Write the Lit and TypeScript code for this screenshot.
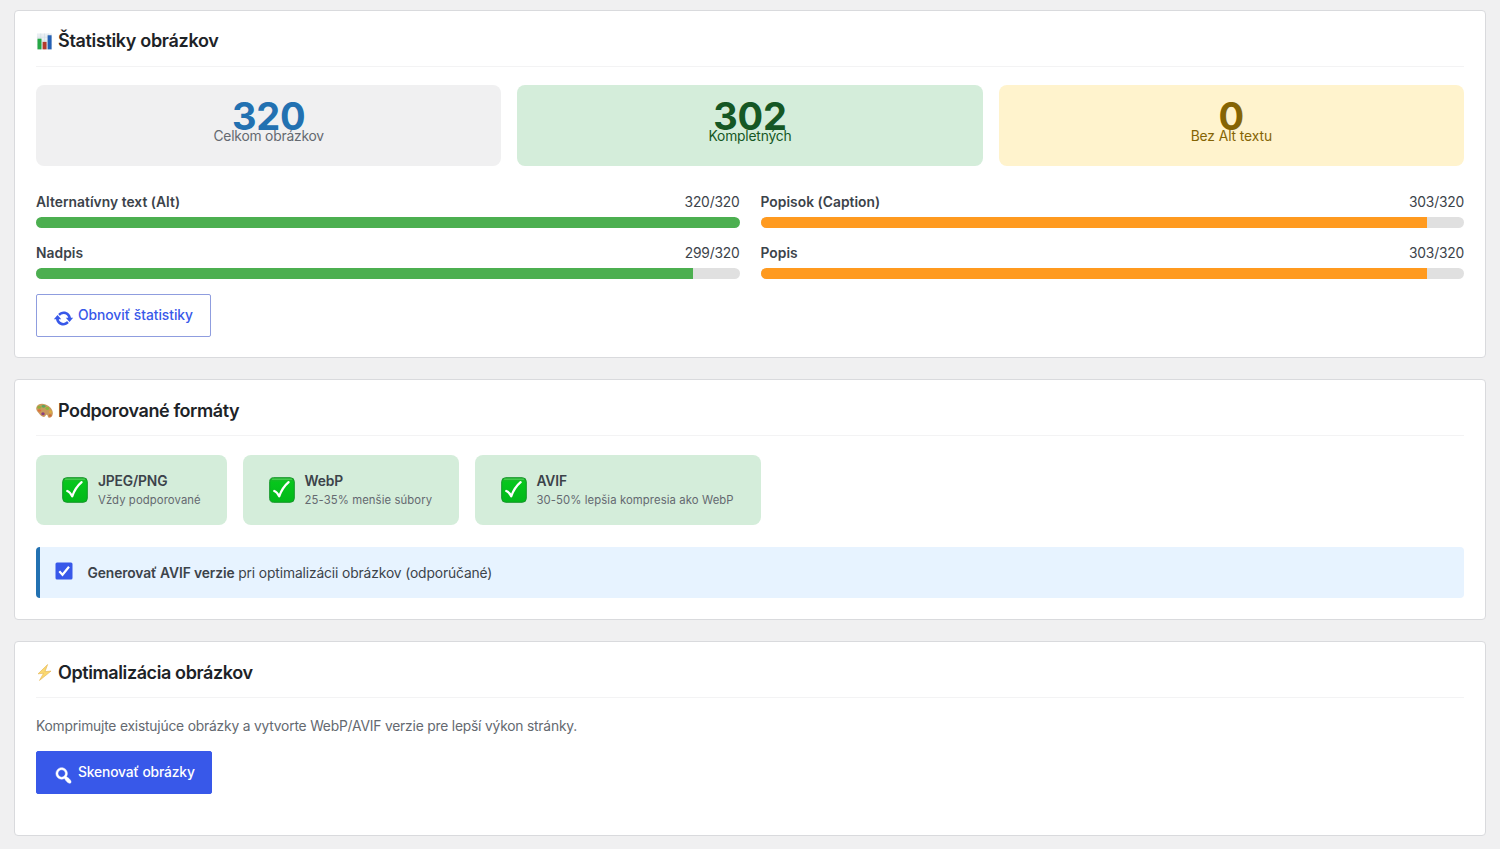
import { LitElement, html, css, svg } from "lit";
import { customElement } from "lit/decorators.js";
import { styleMap } from "lit/directives/style-map.js";

interface Progress {
  label: string;
  done: number;
  total: number;
  tone: string;
}

const progress: Progress[] = [
  { label: "Alternatívny text (Alt)", done: 320, total: 320, tone: "green" },
  { label: "Popisok (Caption)", done: 303, total: 320, tone: "orange" },
  { label: "Nadpis", done: 299, total: 320, tone: "green" },
  { label: "Popis", done: 303, total: 320, tone: "orange" },
];

const formats = [
  { id: "jpeg", name: "JPEG/PNG", note: "Vždy podporované" },
  { id: "webp", name: "WebP", note: "25-35% menšie súbory" },
  { id: "avif", name: "AVIF", note: "30-50% lepšia kompresia ako WebP" },
];

const chartIcon = svg`<svg class="emoji" viewBox="0 0 18 18">
  <rect x="1" y="0.5" width="16" height="17" fill="#e9eef2"/>
  <path d="M1 4.5h16M1 8.5h16M1 12.5h16M5 .5v17M9 .5v17M13 .5v17" stroke="#cfdbe4" stroke-width=".6"/>
  <rect x="1.6" y="6" width="4.2" height="11.3" fill="#26a845"/>
  <rect x="7" y="9.4" width="4.2" height="7.9" fill="#b23a2c"/>
  <rect x="12.3" y="2.4" width="4.2" height="14.9" fill="#2560b4"/>
</svg>`;

const paletteIcon = svg`<svg class="emoji" viewBox="0 0 18 18">
  <path d="M.3 6.200C1 2 6 1 10.200 2.600c4.800 1.800 8 5.800 7.600 9.900-.3 3.300-2.700 4.600-4.300 4.100-1.500-.5-.6-2.600-2-3-1.300-.4-1.200 2.300-3.200 2.200-2.200-.1-4-2.500-5.300-4C1.300 10.100-.1 8.500.3 6.200z" fill="#c99a5c"/>
  <ellipse cx="3.500" cy="5.600" rx="2" ry="1.600" fill="#8fae3e"/>
  <ellipse cx="8" cy="4.600" rx="2.300" ry="1.500" fill="#5da65a"/>
  <ellipse cx="12" cy="6.900" rx="2" ry="1.500" fill="#8cb83c"/>
  <ellipse cx="3.700" cy="9.100" rx="1.700" ry="1.300" fill="#e0713c"/>
  <ellipse cx="15.200" cy="10.400" rx="1.500" ry="1.700" fill="#dcae3d"/>
  <ellipse cx="7.400" cy="12.500" rx="1.800" ry="1.600" fill="#8a3f7f"/>
  <ellipse cx="15" cy="14.200" rx="1.500" ry="1.300" fill="#cf6a3a"/>
</svg>`;

const boltIcon = svg`<svg class="emoji" viewBox="0 0 18 18">
  <path d="M12.300.6 2.200 10.400l5.800-.6-4.300 7.600 12.200-9.900-6.400.6z" fill="#fbd970" stroke="#e5b858" stroke-width=".7" stroke-linejoin="round"/>
</svg>`;

const checkIcon = svg`<svg class="check" viewBox="0 0 26 26">
  <defs>
    <linearGradient id="g" x1="0" y1="0" x2="0" y2="1">
      <stop offset="0" stop-color="#22b52c"/><stop offset=".2" stop-color="#06c61c"/><stop offset="1" stop-color="#02b81a"/>
    </linearGradient>
  </defs>
  <rect x=".7" y=".7" width="24.600" height="24.600" rx="4" fill="url(#g)" stroke="#16962a" stroke-width="1"/>
  <path d="M3.500 2.200h19" stroke="#6bd873" stroke-width=".8" stroke-linecap="round"/>
  <path d="M5.300 14c1.700.5 3.700 2.900 4.900 5.300C12.300 13.600 15.600 8.600 19.600 5.200" fill="none" stroke="#fff" stroke-width="2.300" stroke-linejoin="round" stroke-linecap="round"/>
</svg>`;

const refreshIcon = svg`<svg class="dash" viewBox="0 0 20 20">
  <path fill="currentColor" d="M10.200 3.280c3.530 0 6.430 2.610 6.920 6h2.080l-3.500 4-3.500-4h2.320c-.45-1.970-2.210-3.450-4.320-3.450-1.450 0-2.730.71-3.540 1.780L4.950 5.660C6.230 4.200 8.110 3.280 10.200 3.280zm-.4 13.440c-3.520 0-6.430-2.610-6.920-6H.8l3.500-4c1.170 1.330 2.330 2.670 3.500 4H5.480c.45 1.970 2.210 3.450 4.320 3.450 1.450 0 2.730-.71 3.540-1.780l1.710 1.950c-1.280 1.460-3.150 2.380-5.250 2.380z"/>
</svg>`;

const searchIcon = svg`<svg class="dash" viewBox="0 0 20 20">
  <path fill="currentColor" stroke="currentColor" stroke-width=".4" d="M12.140 4.180c1.870 1.870 2.110 4.750.72 6.890.12.100.22.210.36.310.2.160.47.360.81.590.34.240.56.390.66.470.42.310.73.570.94.780.32.320.6.650.84 1 .25.350.44.690.59 1.040.14.350.21.680.18 1-.02.320-.14.590-.36.810s-.49.340-.81.360c-.31.020-.65-.04-.99-.19-.35-.14-.7-.34-1.040-.59-.35-.24-.68-.52-1-.84-.21-.21-.47-.52-.77-.93-.1-.13-.25-.35-.47-.66-.22-.32-.4-.57-.56-.78-.16-.2-.29-.35-.44-.5-2.070 1.090-4.690.76-6.440-.98-2.140-2.150-2.140-5.640 0-7.780 2.150-2.150 5.630-2.150 7.780 0zm-1.410 6.360c1.360-1.370 1.360-3.580 0-4.950-1.370-1.370-3.590-1.370-4.950 0-1.370 1.370-1.370 3.580 0 4.950 1.360 1.370 3.580 1.370 4.950 0z"/>
</svg>`;

@customElement("app-root")
export class AppRoot extends LitElement {
  static styles = css`
    :host {
      display: flex;
      flex-direction: column;
      gap: 21px;
      box-sizing: border-box;
      height: 849px;
      padding: 10px 14px 0;
      background: #f0f0f1;
      color: #3c434a;
      font: 13.8px/20px Inter, "Liberation Sans", sans-serif;
      letter-spacing: -0.19px;
      overflow: hidden;
    }
    * { box-sizing: border-box; }
    .card {
      flex: none;
      padding: 14px 21px 0;
      background: #fff;
      border: 1px solid #d9dadd;
      border-radius: 4px;
    }
    .stats { height: 348px; }
    .formats { height: 241px; }
    .optimise { height: 195px; }
    h2 {
      display: flex;
      align-items: center;
      gap: 5px;
      height: 42px;
      margin: 0 0 18px;
      padding-bottom: 8px;
      border-bottom: 1px solid #f3f3f4;
      color: #1d2327;
      font-size: 18px;
      font-weight: 600;
      letter-spacing: -0.4px;
      white-space: nowrap;
    }
    .stats h2 { padding-bottom: 9px; letter-spacing: -0.33px; }
    .emoji { width: 17px; height: 17px; flex: none; }
    .tiles { display: grid; grid-template-columns: repeat(3, 1fr); gap: 16px; }
    .tile {
      height: 81px;
      padding-top: 21px;
      border-radius: 8px;
      background: #f0f0f1;
      text-align: center;
    }
    .number { color: #2271b1; font-size: 38px; line-height: 20px; font-weight: 700; letter-spacing: -0.2px; }
    .caption { color: #646970; line-height: 20px; }
    .ok { background: #d4edda; }
    .ok .number, .ok .caption { color: #155724; }
    .warn { background: #fff3cd; }
    .warn .number, .warn .caption { color: #856404; }
    .warn .caption { letter-spacing: -0.08px; }
    .bars {
      display: grid;
      grid-template-columns: 1fr 1fr;
      gap: 15px 21px;
      margin: 26px 0 15px;
    }
    .row { display: flex; justify-content: space-between; margin-bottom: 5px; }
    strong { font-weight: 600; letter-spacing: -0.1px; }
    .row strong { letter-spacing: 0.04px; }
    .track { height: 11px; overflow: hidden; border-radius: 6px; background: #e0e0e0; }
    .fill { height: 100%; }
    .green { background: #4caf50; }
    .orange { background: #ff9a1f; }
    button {
      display: flex;
      align-items: center;
      gap: 4px;
      height: 43px;
      padding: 0 0 1px 16px;
      border: 1px solid #3858e9;
      border-radius: 2px;
      font: 500 13.8px/20px Inter, "Liberation Sans", sans-serif;
      white-space: nowrap;
    }
    .outline { width: 174.500px; background: #fff; border-color: #8f9ddf; color: #3858e9; letter-spacing: -0.03px; }
    .solid { width: 176px; background: #3858e9; color: #fff; letter-spacing: -0.14px; }
    .dash { width: 21px; height: 21px; flex: none; margin-top: 6px; }
    .chips { display: flex; gap: 16px; margin-top: 19px; }
    .chip {
      display: flex;
      align-items: center;
      gap: 10px;
      height: 70px;
      padding-left: 26px;
      border-radius: 8px;
      background: #d4edda;
      white-space: nowrap;
    }
    .chip strong { letter-spacing: -0.14px; }
    .jpeg { width: 190.500px; }
    .webp { width: 216px; }
    .avif { width: 286.500px; }
    .check { width: 26px; height: 26px; flex: none; }
    .note { color: #646970; font-size: 11.300px; line-height: 19px; letter-spacing: 0.1px; }
    .notice {
      display: flex;
      align-items: center;
      gap: 14.500px;
      height: 51px;
      margin-top: 22px;
      padding-left: 15px;
      border-left: 4px solid #2271b1;
      border-radius: 4px;
      background: #e7f3ff;
      letter-spacing: -0.12px;
    }
    .box { width: 18px; height: 18px; margin-top: -4px; }
    p { margin: 0 0 15px; color: #646970; }
  `;

  render() {
    return html`
      <section class="card stats">
        <h2>${chartIcon}<span>Štatistiky obrázkov</span></h2>
        <div class="tiles">
          <div class="tile"><div class="number">320</div><div class="caption">Celkom obrázkov</div></div>
          <div class="tile ok"><div class="number">302</div><div class="caption">Kompletných</div></div>
          <div class="tile warn"><div class="number">0</div><div class="caption">Bez Alt textu</div></div>
        </div>
        <div class="bars">
          ${progress.map(
            (p) => html`<div>
              <div class="row"><strong>${p.label}</strong><span>${p.done}/${p.total}</span></div>
              <div class="track">
                <div class="fill ${p.tone}" style=${styleMap({ width: `${(p.done / p.total) * 100}%` })}></div>
              </div>
            </div>`
          )}
        </div>
        <button class="outline">${refreshIcon}<span>Obnoviť štatistiky</span></button>
      </section>

      <section class="card formats">
        <h2>${paletteIcon}<span>Podporované formáty</span></h2>
        <div class="chips">
          ${formats.map(
            (f) => html`<div class="chip ${f.id}">
              ${checkIcon}
              <div><strong>${f.name}</strong><div class="note">${f.note}</div></div>
            </div>`
          )}
        </div>
        <div class="notice">
          <svg class="box" viewBox="0 0 18 18">
            <rect x=".5" y=".5" width="17" height="17" rx="1.500" fill="#3858e9" />
            <path d="M4.300 9.200 7.500 12.700 14 4.800" fill="none" stroke="#fff" stroke-width="2.200" />
          </svg>
          <span><strong>Generovať AVIF verzie</strong> pri optimalizácii obrázkov (odporúčané)</span>
        </div>
      </section>

      <section class="card optimise">
        <h2>${boltIcon}<span>Optimalizácia obrázkov</span></h2>
        <p>Komprimujte existujúce obrázky a vytvorte WebP/AVIF verzie pre lepší výkon stránky.</p>
        <button class="solid">${searchIcon}<span>Skenovať obrázky</span></button>
      </section>
    `;
  }
}
